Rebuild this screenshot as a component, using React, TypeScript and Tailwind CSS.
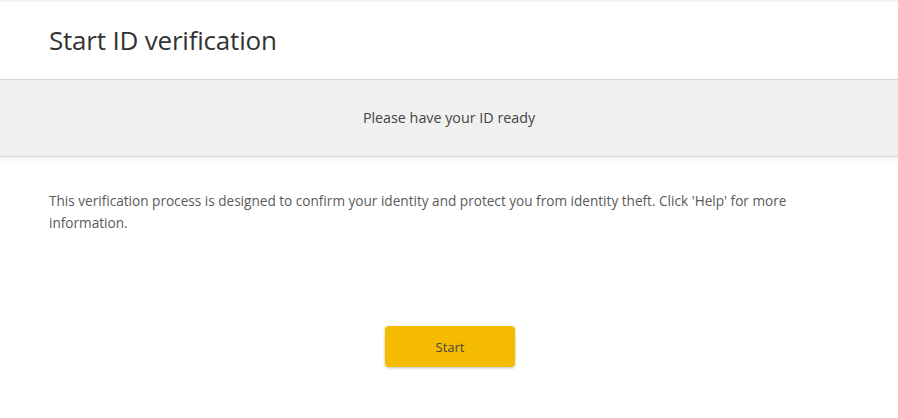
export default function App() {
  return (
    <div
      className="min-h-[418px] bg-white text-[#333333]"
      style={{ fontFamily: '"Open Sans", "Noto Sans", sans-serif' }}
    >
      <div className="h-[2px] bg-[#f2f2f2]" />
      <header className="h-[77px] px-[49px] pt-[21px]">
        <h1 className="text-[26px] leading-[34px] text-[#333333] tracking-[-0.2px]">Start ID verification</h1>
      </header>
      <div className="flex h-[78px] items-center justify-center border-y border-[#d6d6d6] bg-[#f0f0f0] shadow-[0_3px_6px_rgba(0,0,0,0.06)]">
        <p className="text-[14.3px] text-[#444444]">Please have your ID ready</p>
      </div>
      <div className="px-[49px] pt-[33px]">
        <p className="text-[13.6px] leading-[22px] text-[#5a5a5a]">
          This verification process is designed to confirm your identity and protect you from identity theft. Click 'Help' for more information.
        </p>
      </div>
      <div className="flex justify-center pt-[92px] pl-[2px]">
        <button className="h-[41px] w-[130px] rounded-[4px] bg-[#f5bb00] pt-[3px] text-[13px] text-[#444444] shadow-[0_1px_3px_rgba(0,0,0,0.25)]">
          Start
        </button>
      </div>
    </div>
  );
}
